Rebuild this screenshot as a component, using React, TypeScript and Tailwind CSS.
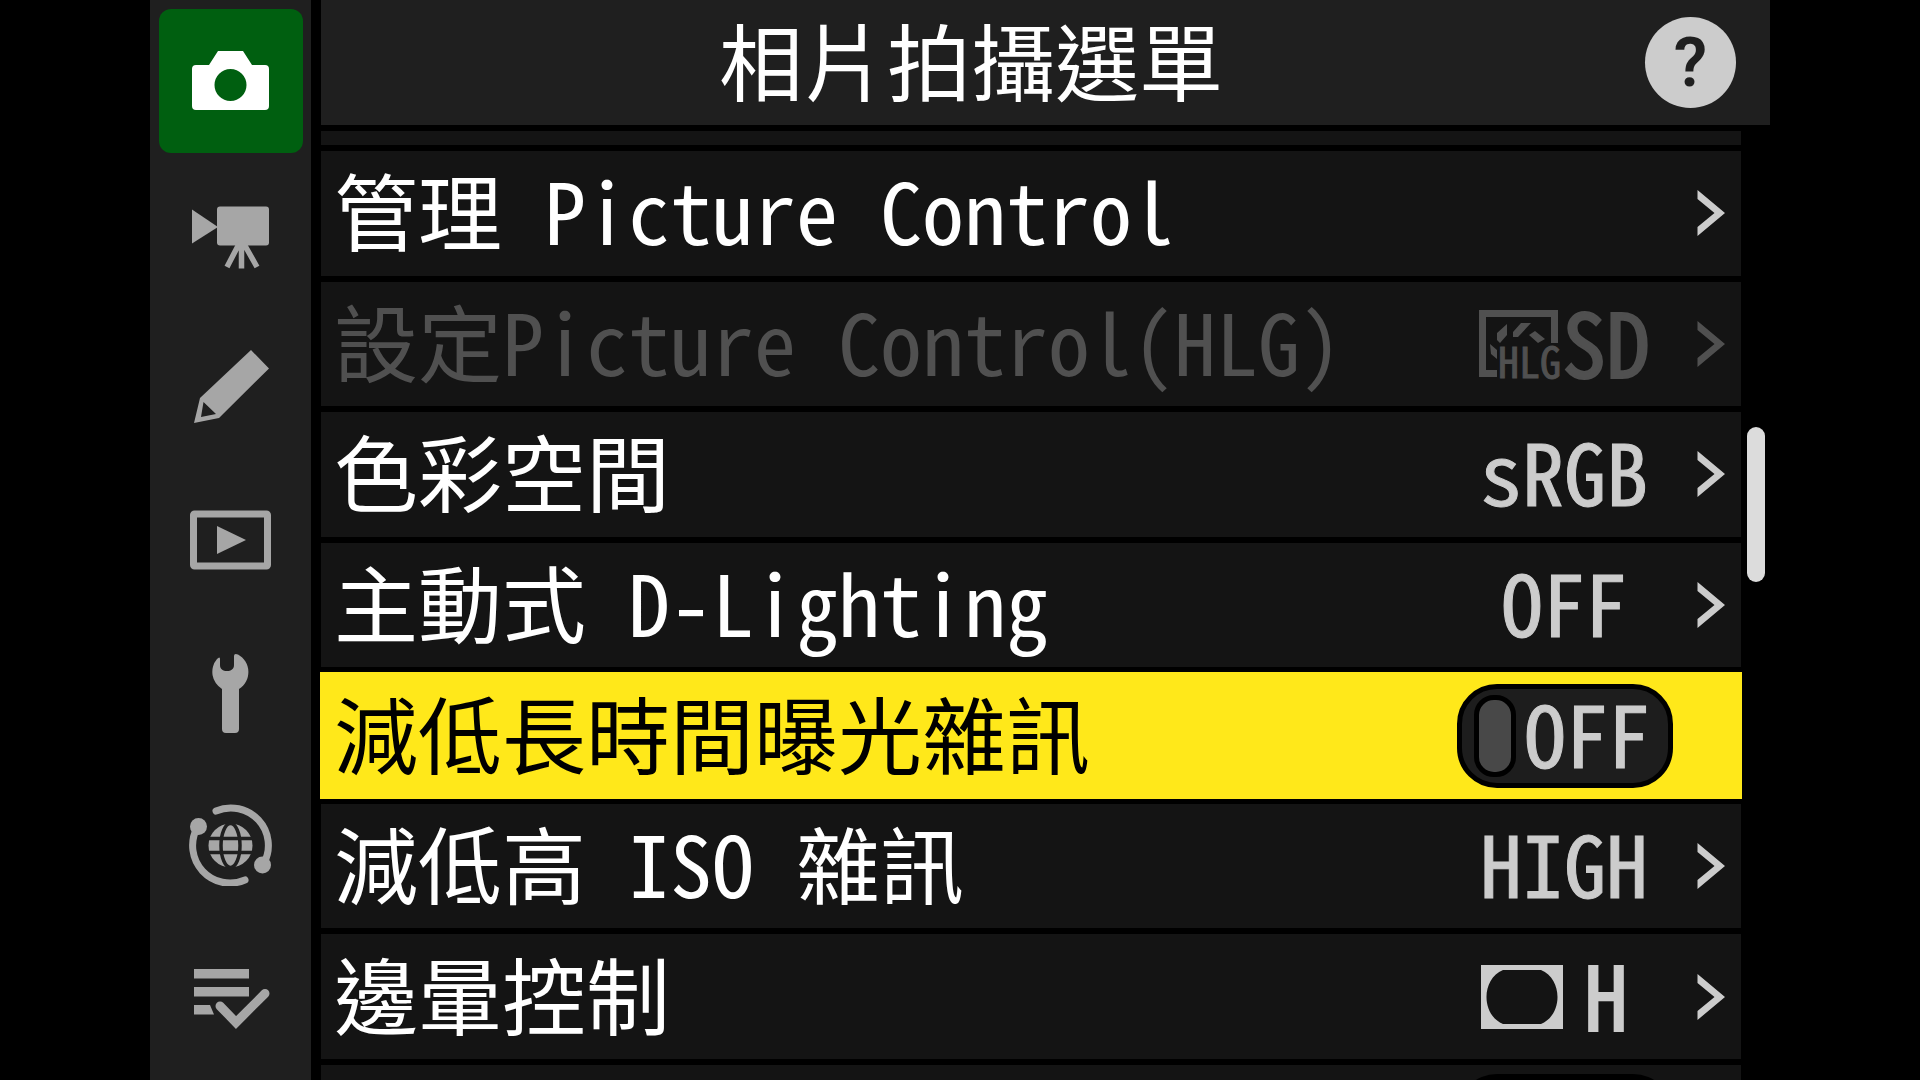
import { useState, type ReactNode } from 'react'

/* ── Sidebar icons (all on the same 84px canvas) ─────────────── */

function CameraIcon() {
  return (
    <svg viewBox="0 0 84 84" className="size-[84px]" fill="currentColor">
      <path
        fillRule="evenodd"
        d="M20 26 29 12H54L63 26H76Q80 26 80 30V67Q80 71 76 71H7Q3 71 3 67V30Q3 26 7 26ZM41.5 30a16 16 0 1 0 0 32a16 16 0 1 0 0-32Z"
      />
    </svg>
  )
}

function VideoIcon() {
  return (
    <svg viewBox="0 0 84 84" className="size-[84px]" fill="currentColor">
      <rect x="28" y="14.5" width="52" height="39" rx="3" />
      <path d="M3 17.5 29 35 3 51.5Z" />
      <path d="M52.5 50V76.5M50.5 51 38 75M54.5 51 68 75" stroke="currentColor" strokeWidth="5.5" />
    </svg>
  )
}

function PencilIcon() {
  return (
    <svg viewBox="0 0 84 84" className="size-[84px]" fill="currentColor">
      <path
        fillRule="evenodd"
        d="M62 6 80 24.5 30 74 5 79 11 54ZM14.5 58 12 73 27 70Z"
      />
    </svg>
  )
}

function PlaybackIcon() {
  return (
    <svg viewBox="0 0 84 84" className="size-[84px]" fill="currentColor">
      <rect x="4.5" y="17" width="74" height="52" rx="1" fill="none" stroke="currentColor" strokeWidth="7" />
      <path d="M28 29 57 43 28 57Z" />
    </svg>
  )
}

function WrenchIcon() {
  return (
    <svg viewBox="0 0 84 84" className="size-[84px]" fill="currentColor">
      <path d="M31 9V16C31 20 34 22 38 22S45 20 45 16V7Q45 4 49 5.5A20 20 0 0 1 50 40V80Q50 84 46 84H37Q33 84 33 80V40A20 20 0 0 1 28 10Q31 7 31 10Z" />
    </svg>
  )
}

function NetworkIcon() {
  return (
    <svg viewBox="0 0 84 84" className="size-[84px]" fill="currentColor">
      <g fill="none" stroke="currentColor" strokeWidth="7" strokeLinecap="round">
        <path d="M27 9A37.5 37.5 0 0 1 75 61" />
        <path d="M56 78A37.5 37.5 0 0 1 8 26" />
      </g>
      <circle cx="73.5" cy="63" r="8.5" />
      <circle cx="9.5" cy="24.5" r="8.5" />
      <circle cx="41.5" cy="43.5" r="22" />
      <g fill="none" stroke="#1f1f1f" strokeWidth="3.5">
        <ellipse cx="41.5" cy="43.5" rx="9.5" ry="22" />
        <path d="M18 36.5H65M18 50.5H65" />
      </g>
    </svg>
  )
}

function MyMenuIcon() {
  return (
    <svg viewBox="0 0 84 84" className="size-[84px]" fill="currentColor">
      <path d="M5 15H60V24.5H5ZM5 33H60V42.5H5ZM5 51H21L25 60.5H5Z" />
      <path
        d="M31 52 47 68.5 76 39.5"
        fill="none"
        stroke="currentColor"
        strokeWidth="9"
        strokeLinecap="round"
      />
    </svg>
  )
}

/* ── Row icons ───────────────────────────────────────────────── */

function Chevron() {
  return (
    <svg viewBox="0 0 28 46" className="h-[46px] w-[28px]" fill="currentColor">
      <path d="M0.5 0 28 23 0.5 46V37L17.5 23 0.5 9Z" />
    </svg>
  )
}

function HlgIcon() {
  return (
    <svg viewBox="0 0 84 96" className="h-[96px] w-[84px] flex-none" fill="currentColor">
      <path d="M1 14H80V47H73V21H8V74H19V81H1Z" />
      <path d="M19 37 29 28V39L22 47 19 44ZM35 36 43 27H53L40 41H35ZM51 39 57 35 67 43 60 47ZM12 48 19 54V63L13 58Z" />
      <text
        x="20"
        y="82"
        stroke="currentColor"
        strokeWidth="1"
        className="font-['Noto_Sans_Mono_CJK_TC','Liberation_Mono',monospace] text-[42px]"
      >
        HLG
      </text>
    </svg>
  )
}

function VignetteIcon() {
  return (
    <svg viewBox="0 0 84 64" className="h-[64px] w-[84px] flex-none" fill="currentColor">
      <path fillRule="evenodd" d="M0 0H82V64H0ZM22 5C0 14 0 50 22 59H60C82 50 82 14 60 5Z" />
    </svg>
  )
}

/* ── Menu data ───────────────────────────────────────────────── */

const TABS = [
  { id: 'photo', label: '相片拍攝選單', icon: <CameraIcon /> },
  { id: 'video', label: '影片拍攝選單', icon: <VideoIcon /> },
  { id: 'custom', label: '自訂設定選單', icon: <PencilIcon /> },
  { id: 'playback', label: '播放選單', icon: <PlaybackIcon /> },
  { id: 'setup', label: '設定選單', icon: <WrenchIcon /> },
  { id: 'network', label: '網路選單', icon: <NetworkIcon /> },
  { id: 'mymenu', label: '我的選單', icon: <MyMenuIcon /> },
]

const ROW = 'flex w-full min-h-0 flex-1 items-center pl-[13px] pr-4 text-left'

/** Setting value, drawn a little heavier than the labels. */
function Value({ children, large = false }: { children: string; large?: boolean }) {
  return (
    <span
      className={`pb-2 ${
        large
          ? 'text-[88px] [-webkit-text-stroke:2px_currentColor]'
          : '[-webkit-text-stroke:1px_currentColor]'
      }`}
    >
      {children}
    </span>
  )
}

function MenuRow({
  label,
  children,
  disabled = false,
}: {
  label: string
  children?: ReactNode
  disabled?: boolean
}) {
  return (
    <button
      type="button"
      disabled={disabled}
      className={`${ROW} bg-[#141414] ${disabled ? 'text-[#505050]' : 'text-white'}`}
    >
      <span className="flex-1 whitespace-pre pb-2">{label}</span>
      <span
        className={`mr-[50px] flex w-[166px] items-center justify-center ${disabled ? '' : 'text-[#cccccc]'}`}
      >
        {children}
      </span>
      <span className={disabled ? '' : 'text-[#cccccc]'}>
        <Chevron />
      </span>
    </button>
  )
}

/** Selected row: the value is an on/off switch instead of a submenu. */
function ToggleRow({ label }: { label: string }) {
  const [on, setOn] = useState(false)
  return (
    <label className={`${ROW} bg-[#ffe81a] text-black ring-1 ring-[#ffe81a]`}>
      <span className="flex-1 pb-2">{label}</span>
      <input
        type="checkbox"
        className="sr-only"
        checked={on}
        onChange={(e) => setOn(e.target.checked)}
      />
      <span className="mr-[52px] flex h-[104px] w-[216px] items-center gap-2 rounded-[40px] border-[5px] border-black bg-[#1d1d1d] pl-3 text-[#cccccc]">
        <span className="h-[82px] w-[42px] rounded-[20px] border-[5px] border-black bg-[#484848]" />
        <Value>{on ? 'ON' : 'OFF'}</Value>
      </span>
    </label>
  )
}

export default function App() {
  const [tab, setTab] = useState('photo')

  return (
    <div className="flex h-screen overflow-hidden bg-black px-[150px] font-['Noto_Sans_Mono_CJK_TC','Liberation_Mono','Noto_Sans_CJK_TC',monospace] text-[84px] leading-none text-white">
      <nav className="mr-[10px] flex w-[161px] flex-none flex-col items-center justify-between bg-[#1f1f1f] pt-[9px] pb-3">
        {TABS.map((t) => (
          <button
            key={t.id}
            type="button"
            aria-label={t.label}
            onClick={() => setTab(t.id)}
            className={`flex size-36 items-center justify-center rounded-xl ${
              t.id === tab ? 'bg-[#005f10] text-white' : 'text-[#a6a6a6]'
            }`}
          >
            {t.icon}
          </button>
        ))}
      </nav>

      <main className="flex min-w-0 flex-1 flex-col gap-[6px]">
        <header className="flex h-[125px] flex-none items-center bg-[#1f1f1f] pr-[34px]">
          <h1 className="flex-1 pr-6 pb-2 text-center leading-[112px]">相片拍攝選單</h1>
          <button
            type="button"
            aria-label="說明"
            className="flex size-[91px] items-center justify-center rounded-full bg-[#cccccc] font-['Roboto',sans-serif] text-[68px] font-semibold text-[#1f1f1f]"
          >
            ?
          </button>
        </header>

        <div className="flex min-h-0 flex-1 gap-[6px]">
          <div className="flex min-w-0 flex-1 flex-col gap-[6px]">
            <div className="h-[14px] flex-none bg-[#141414]" />
            <MenuRow label="管理 Picture Control" />
            <MenuRow label="設定Picture Control(HLG)" disabled>
              <HlgIcon />
              <Value large>SD</Value>
            </MenuRow>
            <MenuRow label="色彩空間">
              <Value>sRGB</Value>
            </MenuRow>
            <MenuRow label="主動式 D-Lighting">
              <Value>OFF</Value>
            </MenuRow>
            <ToggleRow label="減低長時間曝光雜訊" />
            <MenuRow label="減低高 ISO 雜訊">
              <Value>HIGH</Value>
            </MenuRow>
            <MenuRow label="邊暈控制">
              <VignetteIcon />
              <span className="flex flex-1 justify-center">
                <Value large>H</Value>
              </span>
            </MenuRow>
            <div className="flex h-[15px] flex-none justify-end overflow-hidden bg-[#141414] pt-[9px] pr-[68px]">
              <div className="h-[104px] w-[216px] flex-none rounded-[40px] bg-black" />
            </div>
          </div>

          {/* Scroll position */}
          <div className="flex w-[23px] flex-none flex-col">
            <div className="flex-[296]" />
            <div className="w-[18px] flex-[155] rounded-full bg-[#dcdcdc]" />
            <div className="flex-[498]" />
          </div>
        </div>
      </main>
    </div>
  )
}
